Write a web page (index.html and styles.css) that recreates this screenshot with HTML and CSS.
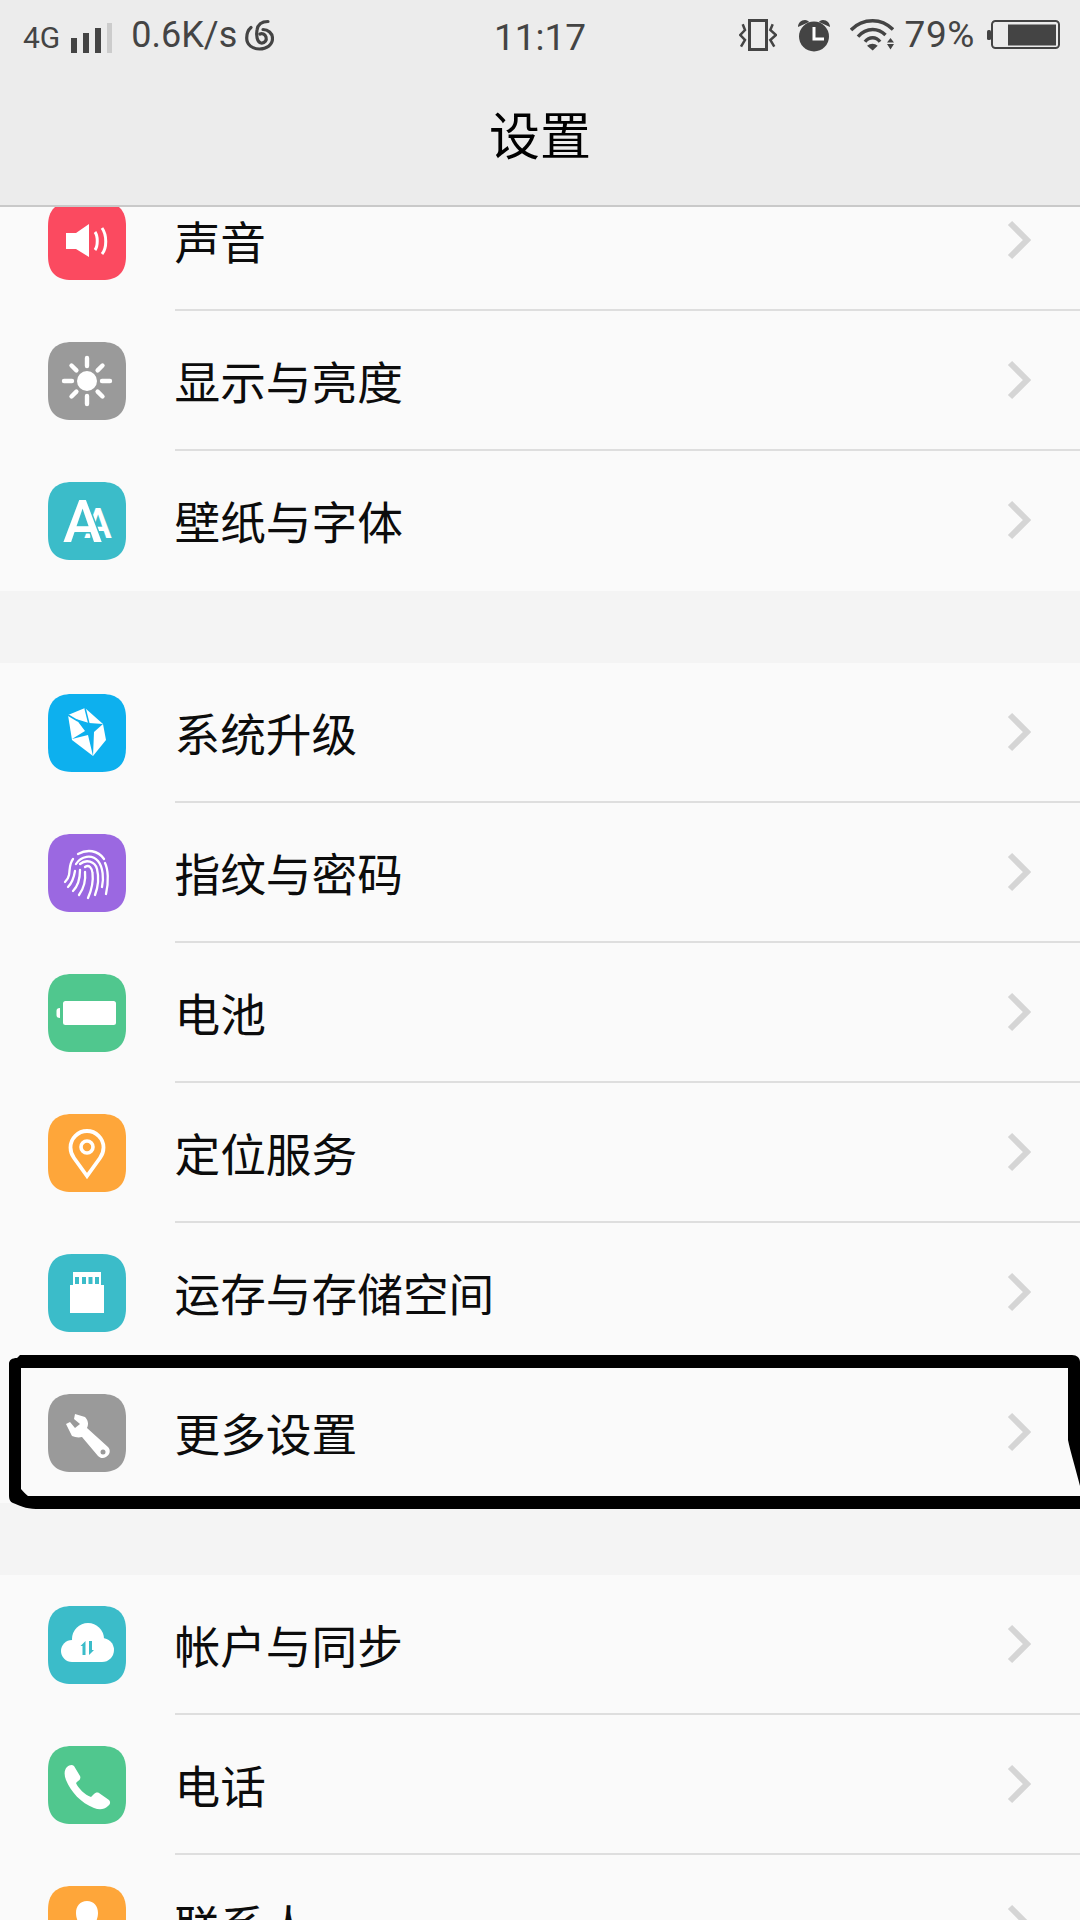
FILE: index.html
```html
<!DOCTYPE html>
<html lang="zh">
<head>
<meta charset="utf-8">
<title>设置</title>
<link rel="stylesheet" href="styles.css">
</head>
<body>
<svg class="defs" width="0" height="0" aria-hidden="true">
  <symbol id="sq" viewBox="0 0 78 78"><path d="M24 0H54C70 0 78 8 78 24V54C78 70 70 78 54 78H24C8 78 0 70 0 54V24C0 8 8 0 24 0Z"/></symbol>
</svg>
<div class="phone">
  <header class="top">
    <div class="status">
      <div class="st-left">
        <span class="net">4G</span>
        <svg class="signal" width="41" height="30" viewBox="0 0 41 30"><rect x="0" y="15" width="6" height="15" fill="#444"/><rect x="12" y="10" width="6" height="20" fill="#444"/><rect x="24" y="5" width="6" height="25" fill="#444"/><rect x="36" y="0" width="5" height="30" fill="#ccc"/></svg>
        <span class="speed">0.6K/s</span>
        <svg class="swirl" width="29" height="32" viewBox="0 0 29 32" fill="none" stroke="#444" stroke-width="3.2" stroke-linecap="round"><path d="M23 2.500C18 2.500 13 4 12 11C11 16 12 23.500 16 24C20 24.500 22 21 21 18C20 15 17 14 15 15"/><path d="M6 8.500C3 11 1.700 15 1.700 19C1.700 26 7.500 30 14.500 30C21.500 30 27.500 26 27.500 19.500C27.500 14 23 10.500 18 10.500"/></svg>
      </div>
      <div class="clock">11:17</div>
      <div class="st-right">
        <svg class="vib" width="38" height="32" viewBox="0 0 38 32" fill="none" stroke="#444"><rect x="10.500" y="1.500" width="17" height="29" stroke-width="3"/><path d="M3.700 5.300L6 11L1.300 16L6 21L2 27.700" stroke-width="2.500"/><path d="M33.700 5.300L31.300 11L37 16L31.300 21L35.300 27.700" stroke-width="2.500"/></svg>
        <svg class="alarm" width="34" height="33" viewBox="0 0 34 33"><circle cx="17" cy="17.500" r="15" fill="#444"/><path d="M1 8C1 4 4 1 8 1C10 1 11.500 2 12 3ZM33 8C33 4 30 1 26 1C24 1 22.500 2 22 3Z" fill="#444"/><path d="M17 8V20H27" fill="none" stroke="#fff" stroke-width="3"/></svg>
        <svg class="wifi" width="44" height="32" viewBox="0 0 44 32" fill="none" stroke="#444" stroke-width="3.400"><path d="M1 11C7 4.500 14 1.700 22.700 1.700C30 1.700 37 4.500 43 10.500"/><path d="M8 17.700C12 13 17 10.500 22.700 10.500C28 10.500 32 12.500 35.500 16"/><path d="M15 22.700C17 20 19.500 18.700 22.700 18.700C25.500 18.700 28 20 30 22.700"/><path d="M17 26.700L22.700 31.500L27.700 26.700C24.500 24 20.500 24 17 26.700Z" fill="#444" stroke="none"/><path d="M40.500 19L44 23.500H37ZM40.500 30.500L44 25H37Z" fill="#444" stroke="none"/></svg>
        <span class="pct">79%</span>
        <svg class="batt" width="73" height="30" viewBox="0 0 73 30"><rect x="0" y="10" width="4" height="10" rx="1.500" fill="#444"/><rect x="5" y="1" width="67" height="27" rx="3.500" fill="none" stroke="#444" stroke-width="2"/><rect x="21" y="4.500" width="48" height="21" fill="#444"/></svg>
      </div>
    </div>
    <h1 class="title">设置</h1>
  </header>

  <main class="list">
    <section class="group first">
      <div class="row">
        <svg class="ico" viewBox="0 0 78 78"><use href="#sq" fill="#fb4a60"/><path d="M18 31H28L41 22V55L28 47H18Z" fill="#fff"/><path d="M47 30C50 34 50 44 47 48M54 26C59 33 59 46 54 52" fill="none" stroke="#fff" stroke-width="3"/></svg>
        <div class="cell"><span class="label">声音</span><svg class="chev" viewBox="0 0 24 40"><path d="M3 3L20 20L3 37"/></svg></div>
      </div>
      <div class="row">
        <svg class="ico" viewBox="0 0 78 78"><use href="#sq" fill="#9a9a9a"/><circle cx="39" cy="39" r="10" fill="#fff"/><path d="M39 16V24M39 54V62M16 39H24M54 39H62M23.500 23.500L28.400 28.400M49.600 49.600L54.500 54.500M23.500 54.500L28.400 49.600M49.600 28.400L54.500 23.500" stroke="#fff" stroke-width="4.400" stroke-linecap="round"/></svg>
        <div class="cell"><span class="label">显示与亮度</span><svg class="chev" viewBox="0 0 24 40"><path d="M3 3L20 20L3 37"/></svg></div>
      </div>
      <div class="row end">
        <svg class="ico" viewBox="0 0 78 78"><use href="#sq" fill="#3bbcc9"/><text class="aa"><tspan class="aa-s" x="36" y="56">A</tspan><tspan class="aa-b" x="15" y="60">A</tspan></text></svg>
        <div class="cell"><span class="label">壁纸与字体</span><svg class="chev" viewBox="0 0 24 40"><path d="M3 3L20 20L3 37"/></svg></div>
      </div>
    </section>

    <section class="group">
      <div class="row">
        <svg class="ico" viewBox="0 0 78 78"><use href="#sq" fill="#0db0ee"/><path d="M20 21L37 14L55 30L58 46L45 62L24 46Z" fill="#fff"/><path d="M37 14L41 30M20 21L30 27" stroke="#0db0ee" stroke-width="1.500" fill="none"/><path d="M28 25L41 29L55 30L46 38L45 62L40 41L24 45L37 37Z" fill="#0db0ee"/></svg>
        <div class="cell"><span class="label">系统升级</span><svg class="chev" viewBox="0 0 24 40"><path d="M3 3L20 20L3 37"/></svg></div>
      </div>
      <div class="row">
        <svg class="ico" viewBox="0 0 78 78"><use href="#sq" fill="#9b68e1"/><g fill="none" stroke="#fff" stroke-width="2.300" stroke-linecap="round"><path d="M30 20C39 15 50 16 56 25"/><path d="M25 25C21 30 22 36 21 41C20.500 44 19 46 17 48"/><path d="M57 29C60 35 61 47 58 60"/><path d="M28 30C33 22 44 20 50 27C55 33 56 45 54 53"/><path d="M27 37C26 43 25 48 20 53"/><path d="M32 30C38 25 47 27 49 35C51 43 50 53 47 61"/><path d="M32 36C32 44 30 52 25 57"/><path d="M37 33C41 30 44 34 44.500 39C45.500 47 44 55 40 64"/><path d="M37 38C38 47 36 54 31 61"/></g></svg>
        <div class="cell"><span class="label">指纹与密码</span><svg class="chev" viewBox="0 0 24 40"><path d="M3 3L20 20L3 37"/></svg></div>
      </div>
      <div class="row">
        <svg class="ico" viewBox="0 0 78 78"><use href="#sq" fill="#50c78e"/><rect x="15" y="27" width="53" height="24" rx="2.500" fill="#fff"/><path d="M12 34V44C9.500 44 8.500 43 8.500 41V37C8.500 35 9.500 34 12 34Z" fill="#fff"/></svg>
        <div class="cell"><span class="label">电池</span><svg class="chev" viewBox="0 0 24 40"><path d="M3 3L20 20L3 37"/></svg></div>
      </div>
      <div class="row">
        <svg class="ico" viewBox="0 0 78 78"><use href="#sq" fill="#fea63a"/><path d="M39 62L26 44C23.500 40.500 22.500 37 22.500 33.500C22.500 24.500 30 17 39 17C48 17 55.500 24.500 55.500 33.500C55.500 37 54.500 40.500 52 44Z" fill="none" stroke="#fff" stroke-width="3.800" stroke-linejoin="miter"/><circle cx="39" cy="33" r="6" fill="none" stroke="#fff" stroke-width="3.600"/></svg>
        <div class="cell"><span class="label">定位服务</span><svg class="chev" viewBox="0 0 24 40"><path d="M3 3L20 20L3 37"/></svg></div>
      </div>
      <div class="row">
        <svg class="ico" viewBox="0 0 78 78"><use href="#sq" fill="#3bbcc9"/><path d="M25 18H53V31H56V59H22V31H25Z" fill="#fff"/><path d="M27 23H31V30H27ZM34 23H38V30H34ZM40.500 23H44.500V30H40.500ZM47 23H51V30H47Z" fill="#3bbcc9"/></svg>
        <div class="cell"><span class="label">运存与存储空间</span><svg class="chev" viewBox="0 0 24 40"><path d="M3 3L20 20L3 37"/></svg></div>
      </div>
      <div class="row end">
        <svg class="ico" viewBox="0 0 78 78"><use href="#sq" fill="#9a9a9a"/><path d="M27 20L37 23C40 26 41 30 39 34L60 53C63 56 62 61 58 63C55 65 52 64 50 62L34 43C30 44 27 43 24 42L18 30L22 28L27 34L32 30L26 25Z" fill="#fff"/><circle cx="55" cy="58" r="2.500" fill="#9a9a9a"/></svg>
        <div class="cell"><span class="label">更多设置</span><svg class="chev" viewBox="0 0 24 40"><path d="M3 3L20 20L3 37"/></svg></div>
      </div>
    </section>

    <section class="group">
      <div class="row">
        <svg class="ico" viewBox="0 0 78 78"><use href="#sq" fill="#3bbcc9"/><g fill="#fff"><circle cx="40" cy="33" r="16"/><circle cx="24" cy="45" r="11"/><circle cx="54" cy="44" r="12"/><rect x="24" y="40" width="30" height="16"/></g><path d="M37.500 35V49H34.500V40H32.500ZM41 35H44V44H46L41 49Z" fill="#3bbcc9"/></svg>
        <div class="cell"><span class="label">帐户与同步</span><svg class="chev" viewBox="0 0 24 40"><path d="M3 3L20 20L3 37"/></svg></div>
      </div>
      <div class="row">
        <svg class="ico" viewBox="0 0 78 78"><use href="#sq" fill="#50c78e"/><path d="M19 21C21 19 24 18 26 20L32 30C33 32 32 34 30 35L28 37C30 42 37 49 43 51L46 48C47 47 49 46 51 47L61 54C63 56 62 59 60 60C56 64 51 64 46 62C33 57 23 46 18 34C16 29 16 24 19 21Z" fill="#fff"/></svg>
        <div class="cell"><span class="label">电话</span><svg class="chev" viewBox="0 0 24 40"><path d="M3 3L20 20L3 37"/></svg></div>
      </div>
      <div class="row">
        <svg class="ico" viewBox="0 0 78 78"><use href="#sq" fill="#fea63a"/><path d="M39 15C46 15 50 20 50 27C50 33 47 38 45 41V44C50 47 58 49 61 53C62 55 63 60 63 63H15C15 60 16 55 17 53C20 49 28 47 33 44V41C31 38 28 33 28 27C28 20 32 15 39 15Z" fill="#fff"/></svg>
        <div class="cell"><span class="label">联系人</span><svg class="chev" viewBox="0 0 24 40"><path d="M3 3L20 20L3 37"/></svg></div>
      </div>
    </section>
  </main>

  <svg class="scribble" width="1080" height="1920" viewBox="0 0 1080 1920" aria-hidden="true">
    <path fill-rule="evenodd" d="M20 1355H1072C1077 1355 1080 1358 1080 1362V1509H36C26 1509 18 1505 13 1503C10 1502 9 1499 9 1496V1364C9 1360 12 1358 17 1358ZM21 1368V1489C23 1491 25 1494 28 1496H1080V1486C1076 1470 1070 1450 1068 1440V1368Z" fill="#000"/>
  </svg>
</div>
</body>
</html>
```

FILE: styles.css
```css
* { box-sizing: border-box; }
html, body { margin: 0; padding: 0; }
body { font-family: "Noto Sans CJK SC", "Noto Sans", sans-serif; background: #f4f4f4; }
.defs { display: block; height: 0; }
.phone { position: relative; width: 1080px; height: 1920px; overflow: hidden; background: #f4f4f4; }

.top { position: relative; z-index: 2; height: 207px; background: #ececec; border-bottom: 2px solid #c9c9c9; }
.status { display: grid; grid-template-columns: 1fr auto 1fr; align-items: center; height: 70px; padding: 0 20px 0 23px; color: #444; font-family: Roboto, "Liberation Sans", sans-serif; }
.st-left, .st-right { display: flex; align-items: center; }
.st-right { justify-content: flex-end; }
.net { font-size: 30px; line-height: 30px; margin-top: 6px; margin-right: 11px; }
.signal { margin-top: 5px; margin-right: 19px; }
.speed { font-size: 36px; line-height: 40px; margin-right: 8px; }
.clock { font-size: 37px; line-height: 44px; margin-top: 5px; margin-left: -3px; }
.vib { margin-right: 20px; }
.alarm { margin-right: 19px; }
.wifi { margin-right: 11px; }
.pct { font-size: 37px; line-height: 40px; letter-spacing: 0.6px; margin-right: 12px; }
.title { margin: 0; height: 135px; padding-bottom: 9px; display: flex; justify-content: center; align-items: center; font-size: 51px; font-weight: 400; color: #000; }

.list { display: flex; flex-direction: column; gap: 72px; }
.group { background: #fafafa; display: flex; flex-direction: column; }
.group.first { margin-top: -36px; }
.row { height: 140px; display: flex; align-items: center; padding-left: 48px; gap: 48.5px; }
.ico { width: 78px; height: 78px; flex: none; }
.cell { flex: 1; align-self: stretch; display: flex; align-items: center; justify-content: space-between; padding-right: 49px; border-bottom: 2px solid #dedede; }
.row.end .cell { border-bottom-color: transparent; }
.label { font-size: 45.7px; line-height: 60px; color: #0c0c0c; }
.chev { width: 24px; height: 40px; fill: none; stroke: #d5d5d5; stroke-width: 6; }
.aa { font-family: Roboto, "Liberation Sans", sans-serif; font-weight: 500; fill: #fff; }
.aa-s { font-size: 42px; }
.aa-b { font-size: 59px; stroke: #3bbcc9; stroke-width: 3px; paint-order: stroke; }
.scribble { position: absolute; left: 0; top: 0; z-index: 3; pointer-events: none; }
```
